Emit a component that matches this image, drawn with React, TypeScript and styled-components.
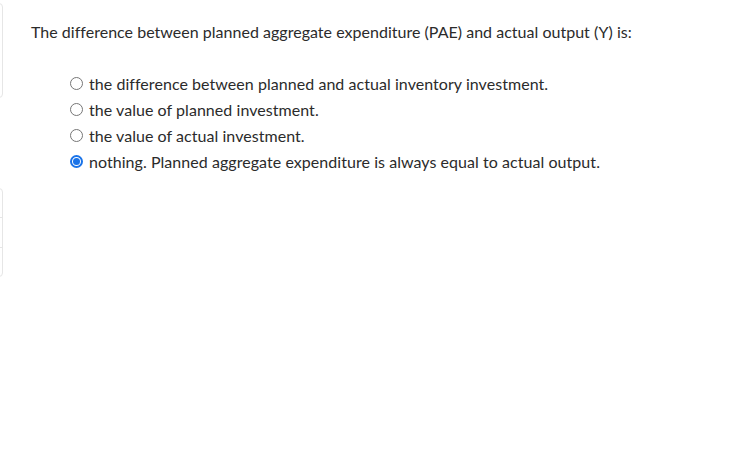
import React from "react";
import styled, { createGlobalStyle } from "styled-components";

const Global = createGlobalStyle`
  html, body { margin: 0; padding: 0; background: #fff; }
  body { font-family: Lato, "Open Sans", "Liberation Sans", sans-serif; color: #2b2b2b; }
`;

const Page = styled.div`
  position: relative;
  width: 750px;
  height: 471px;
  overflow: hidden;
  background: #fff;
`;

const SideCard = styled.div<{ $top: number; $height: number }>`
  position: absolute;
  left: -20px;
  top: ${(p) => p.$top}px;
  width: 23px;
  height: ${(p) => p.$height}px;
  border: 1px solid #e6e6e6;
  border-radius: 4px;
  box-sizing: border-box;
  display: flex;
  flex-direction: column;
`;

const SideCell = styled.div`
  flex: 1;
  & + & { border-top: 1px solid #e6e6e6; }
`;

const Content = styled.div`
  padding: 22px 0 0 31px;
`;

const Question = styled.p`
  margin: 0;
  font-size: 16px;
  line-height: 20px;
  letter-spacing: 0.02px;
`;

const Options = styled.div`
  display: flex;
  flex-direction: column;
  margin: 28px 0 0 39px;
`;

const Option = styled.label`
  display: flex;
  align-items: center;
  height: 26px;
  font-size: 16px;
  letter-spacing: 0.05px;
  gap: 6px;
`;

const Radio = styled.span<{ $checked?: boolean }>`
  width: 13px;
  height: 13px;
  flex: none;
  box-sizing: border-box;
  border-radius: 50%;
  border: ${(p) => (p.$checked ? "2px solid #1a73e8" : "1px solid #767676")};
  background: #fff;
  display: flex;
  align-items: center;
  justify-content: center;
  &::after {
    content: "";
    display: ${(p) => (p.$checked ? "block" : "none")};
    width: 7px;
    height: 7px;
    border-radius: 50%;
    background: #1a73e8;
  }
`;

const options = [
  "the difference between planned and actual inventory investment.",
  "the value of planned investment.",
  "the value of actual investment.",
  "nothing. Planned aggregate expenditure is always equal to actual output.",
];

export default function App() {
  return (
    <Page>
      <Global />
      <SideCard $top={3} $height={95}>
        <SideCell />
      </SideCard>
      <SideCard $top={188} $height={89}>
        <SideCell />
        <SideCell />
        <SideCell />
      </SideCard>
      <Content>
        <Question>
          The difference between planned aggregate expenditure (PAE) and actual output (Y) is:
        </Question>
        <Options>
          {options.map((o, i) => (
            <Option key={i}>
              <Radio $checked={i === 3} />
              {o}
            </Option>
          ))}
        </Options>
      </Content>
    </Page>
  );
}
